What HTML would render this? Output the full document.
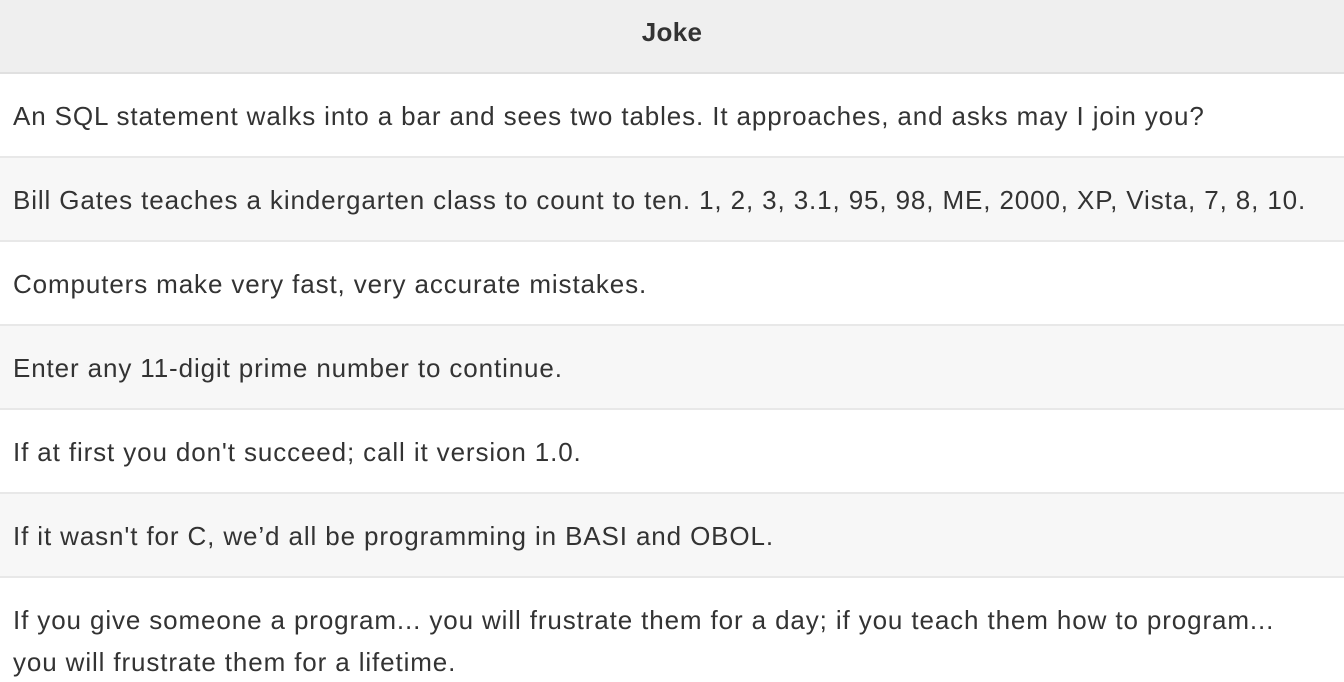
<!DOCTYPE html>
<html><head><meta charset="utf-8"><style>
html,body{margin:0;padding:0;background:#fff;width:1344px;height:682px;overflow:hidden}
table{border-collapse:collapse;width:1344px;font-family:"Liberation Sans",Arial,sans-serif;font-size:26px;letter-spacing:0.88px;color:#333}
th{background:#efefef;font-weight:bold;text-align:center;height:42px;line-height:42px;padding:11px 13px 19px;border-bottom:2px solid #e0e0e0;letter-spacing:0.3px}
td{line-height:42px;padding:21px 13px 19px;border-bottom:2px solid #e8e8e8;text-align:left;white-space:nowrap}
tr:nth-child(even) td{background:#f7f7f7}
</style></head><body>
<table>
<thead><tr><th>Joke</th></tr></thead>
<tbody>
<tr><td>An SQL statement walks into a bar and sees two tables. It approaches, and asks may I join you?</td></tr>
<tr><td>Bill Gates teaches a kindergarten class to count to ten. 1, 2, 3, 3.1, 95, 98, ME, 2000, XP, Vista, 7, 8, 10.</td></tr>
<tr><td>Computers make very fast, very accurate mistakes.</td></tr>
<tr><td>Enter any 11-digit prime number to continue.</td></tr>
<tr><td>If at first you don't succeed; call it version 1.0.</td></tr>
<tr><td>If it wasn't for C, we’d all be programming in BASI and OBOL.</td></tr>
<tr><td>If you give someone a program... you will frustrate them for a day; if you teach them how to program...<br>you will frustrate them for a lifetime.</td></tr>
</tbody>
</table>
</body></html>
